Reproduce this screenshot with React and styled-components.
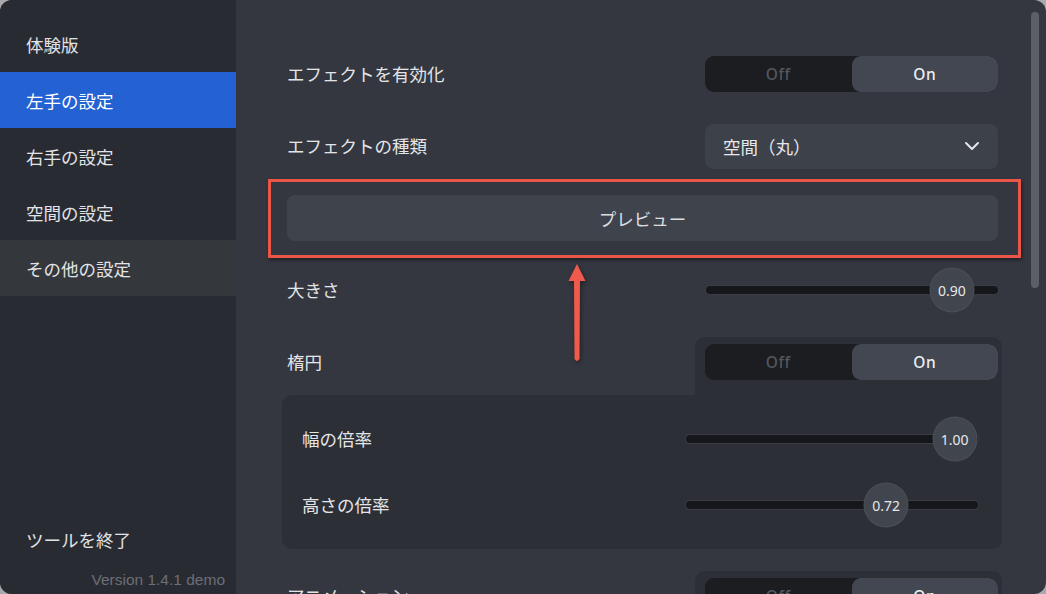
import React from 'react';
import styled, { createGlobalStyle } from 'styled-components';
import { ChevronDown } from 'lucide-react';

const GlobalStyle = createGlobalStyle`
	html, body {
		margin: 0;
		padding: 0;
		background: #a9a9ac;
	}
	body {
		font-family: 'Noto Sans CJK JP', 'Noto Sans', sans-serif;
	}
`;

const menu = ['左手の設定', '右手の設定', '空間の設定', 'その他の設定'];

export default function App () {
	return (
		<>
			<GlobalStyle />
			<Window>
				<Sidebar>
					<MenuItem>体験版</MenuItem>
					{menu.map((m, i) => (
						<MenuItem key={m} $active={i === 0} $hover={i === 3}>{m}</MenuItem>
					))}
					<Spacer />
					<MenuItem>ツールを終了</MenuItem>
					<Version>Version 1.4.1 demo</Version>
				</Sidebar>
				<Main>
					<Row>
						<Label>エフェクトを有効化</Label>
						<Toggle on />
					</Row>
					<Row>
						<Label>エフェクトの種類</Label>
						<Select>
							<span>空間（丸）</span>
							<ChevronDown size={24} strokeWidth={2} />
						</Select>
					</Row>
					<Row>
						<Highlighted>
							<PreviewButton>プレビュー</PreviewButton>
							<RedBox />
							<Arrow width="20" height="104" viewBox="0 0 20 104">
								<path d="M10 3 L18.5 20 L13 20 L12.5 98 Q10 102 7.5 98 L7 20 L1.5 20 Z" fill="#ef5a4c" />
							</Arrow>
						</Highlighted>
					</Row>
					<Row>
						<Label>大きさ</Label>
						<Slider value={0.9} pos={0.842} />
					</Row>
					<Group>
						<GroupHead>
							<Label>楕円</Label>
							<Tab>
								<Toggle on />
							</Tab>
						</GroupHead>
						<Panel>
							<PanelRow>
								<Label>幅の倍率</Label>
								<Slider value={1} pos={0.92} />
							</PanelRow>
							<PanelRow>
								<Label>高さの倍率</Label>
								<Slider value={0.72} pos={0.685} />
							</PanelRow>
						</Panel>
					</Group>
					<Group $mt={11}>
						<GroupHead>
							<Label>アニメーション</Label>
							<Tab>
								<Toggle on />
							</Tab>
						</GroupHead>
					</Group>
					<Scrollbar />
				</Main>
			</Window>
		</>
	);
}

function Toggle ({ on }) {
	return (
		<ToggleBox>
			<ToggleHalf $active={!on}>Off</ToggleHalf>
			<ToggleHalf $active={on}>On</ToggleHalf>
		</ToggleBox>
	);
}

function Slider ({ value, pos }) {
	return (
		<Track>
			<Thumb style={{ left: `${pos * 100}%` }}>{value.toFixed(2)}</Thumb>
		</Track>
	);
}

const Window = styled.div`
	width: 1046px;
	height: 594px;
	display: flex;
	border-radius: 12px;
	overflow: hidden;
	background: #34373f;
`;

const Sidebar = styled.div`
	width: 236px;
	flex-shrink: 0;
	background: #292b32;
	display: flex;
	flex-direction: column;
	padding: 16px 0 4px;
	box-sizing: border-box;
`;

const MenuItem = styled.div`
	height: 56px;
	display: flex;
	align-items: center;
	padding-left: 26px;
	font-size: 17.5px;
	color: ${p => (p.$active ? '#ffffff' : '#e2e3e6')};
	background: ${p => (p.$active ? '#2461d2' : p.$hover ? '#34373c' : 'transparent')};
`;

const Spacer = styled.div`
	flex: 1;
`;

const Version = styled.div`
	margin-top: 3px;
	text-align: right;
	padding-right: 11px;
	font-family: 'Liberation Sans', Arial, sans-serif;
	font-size: 15.5px;
	color: #6b6f77;
	line-height: 20px;
`;

const Main = styled.div`
	position: relative;
	flex: 1;
	padding: 38px 48px 0 51px;
	display: flex;
	flex-direction: column;
	overflow: hidden;
`;

const Row = styled.div`
	height: 72px;
	flex-shrink: 0;
	display: flex;
	align-items: center;
	justify-content: space-between;
`;

const Label = styled.div`
	font-size: 17.5px;
	line-height: 24px;
	color: #e4e5e8;
`;

const ToggleBox = styled.div`
	width: 293px;
	height: 36px;
	display: flex;
	border-radius: 9px;
	overflow: hidden;
	background: #1b1d20;
`;

const ToggleHalf = styled.div`
	flex: 1;
	display: flex;
	align-items: center;
	justify-content: center;
	font-family: 'Noto Sans', sans-serif;
	font-size: 15.5px;
	font-weight: 500;
	letter-spacing: 0.6px;
	color: ${p => (p.$active ? '#eceef0' : '#55585e')};
	background: ${p => (p.$active ? '#434752' : 'transparent')};
	border-radius: ${p => (p.$active ? '9px' : '0')};
`;

const Select = styled.div`
	width: 293px;
	height: 45px;
	box-sizing: border-box;
	display: flex;
	align-items: center;
	justify-content: space-between;
	padding: 0 14px 0 18px;
	border-radius: 8px;
	background: #3d414a;
	color: #e6e7ea;
	font-size: 17.5px;
`;

const Highlighted = styled.div`
	position: relative;
	width: 100%;
`;

const PreviewButton = styled.div`
	height: 46px;
	display: flex;
	align-items: center;
	justify-content: center;
	border-radius: 8px;
	background: #3f434c;
	color: #dcdde0;
	font-size: 17.5px;
`;

const RedBox = styled.div`
	position: absolute;
	left: -19px;
	right: -23px;
	top: -16px;
	bottom: -17px;
	border: 3px solid #ec5648;
	box-shadow: 1px 2px 3px rgba(0, 0, 0, 0.45);
	pointer-events: none;
`;

const Arrow = styled.svg`
	position: absolute;
	left: 280px;
	top: 66px;
	filter: drop-shadow(1px 2px 2px rgba(0, 0, 0, 0.4));
`;

const Track = styled.div`
	position: relative;
	width: 292px;
	height: 8px;
	border-radius: 4px;
	background: #15171b;
	box-shadow: 0 0 0 1px #3a3d45;
`;

const Thumb = styled.div`
	position: absolute;
	top: 50%;
	width: 43px;
	height: 43px;
	transform: translate(-50%, -50%);
	border-radius: 50%;
	background: #41454e;
	box-shadow: 0 0 0 1px #4b4f58;
	display: flex;
	align-items: center;
	justify-content: center;
	font-family: 'Noto Sans', sans-serif;
	font-size: 14px;
	color: #e6e7ea;
`;

const Group = styled.div`
	flex-shrink: 0;
	margin: ${p => p.$mt || 0}px -4px 0 -5px;
	display: flex;
	flex-direction: column;
`;

const GroupHead = styled.div`
	display: flex;
	align-items: flex-end;
	justify-content: space-between;
	padding-left: 5px;

	${Label} {
		margin-bottom: 21px;
	}
`;

const Tab = styled.div`
	padding: 7px 4px 15px 10px;
	margin-top: 11px;
	background: #2c2f36;
	border-radius: 10px 10px 0 0;
`;

const Panel = styled.div`
	background: #2c2f36;
	border-radius: 10px 0 10px 10px;
	padding: 11px 24px 11px 20px;
	display: flex;
	flex-direction: column;
`;

const PanelRow = styled.div`
	height: 66px;
	display: flex;
	align-items: center;
	justify-content: space-between;
`;

const Scrollbar = styled.div`
	position: absolute;
	right: 7px;
	top: 12px;
	width: 8px;
	height: 276px;
	border-radius: 4px;
	background: #5b5f68;
`;
